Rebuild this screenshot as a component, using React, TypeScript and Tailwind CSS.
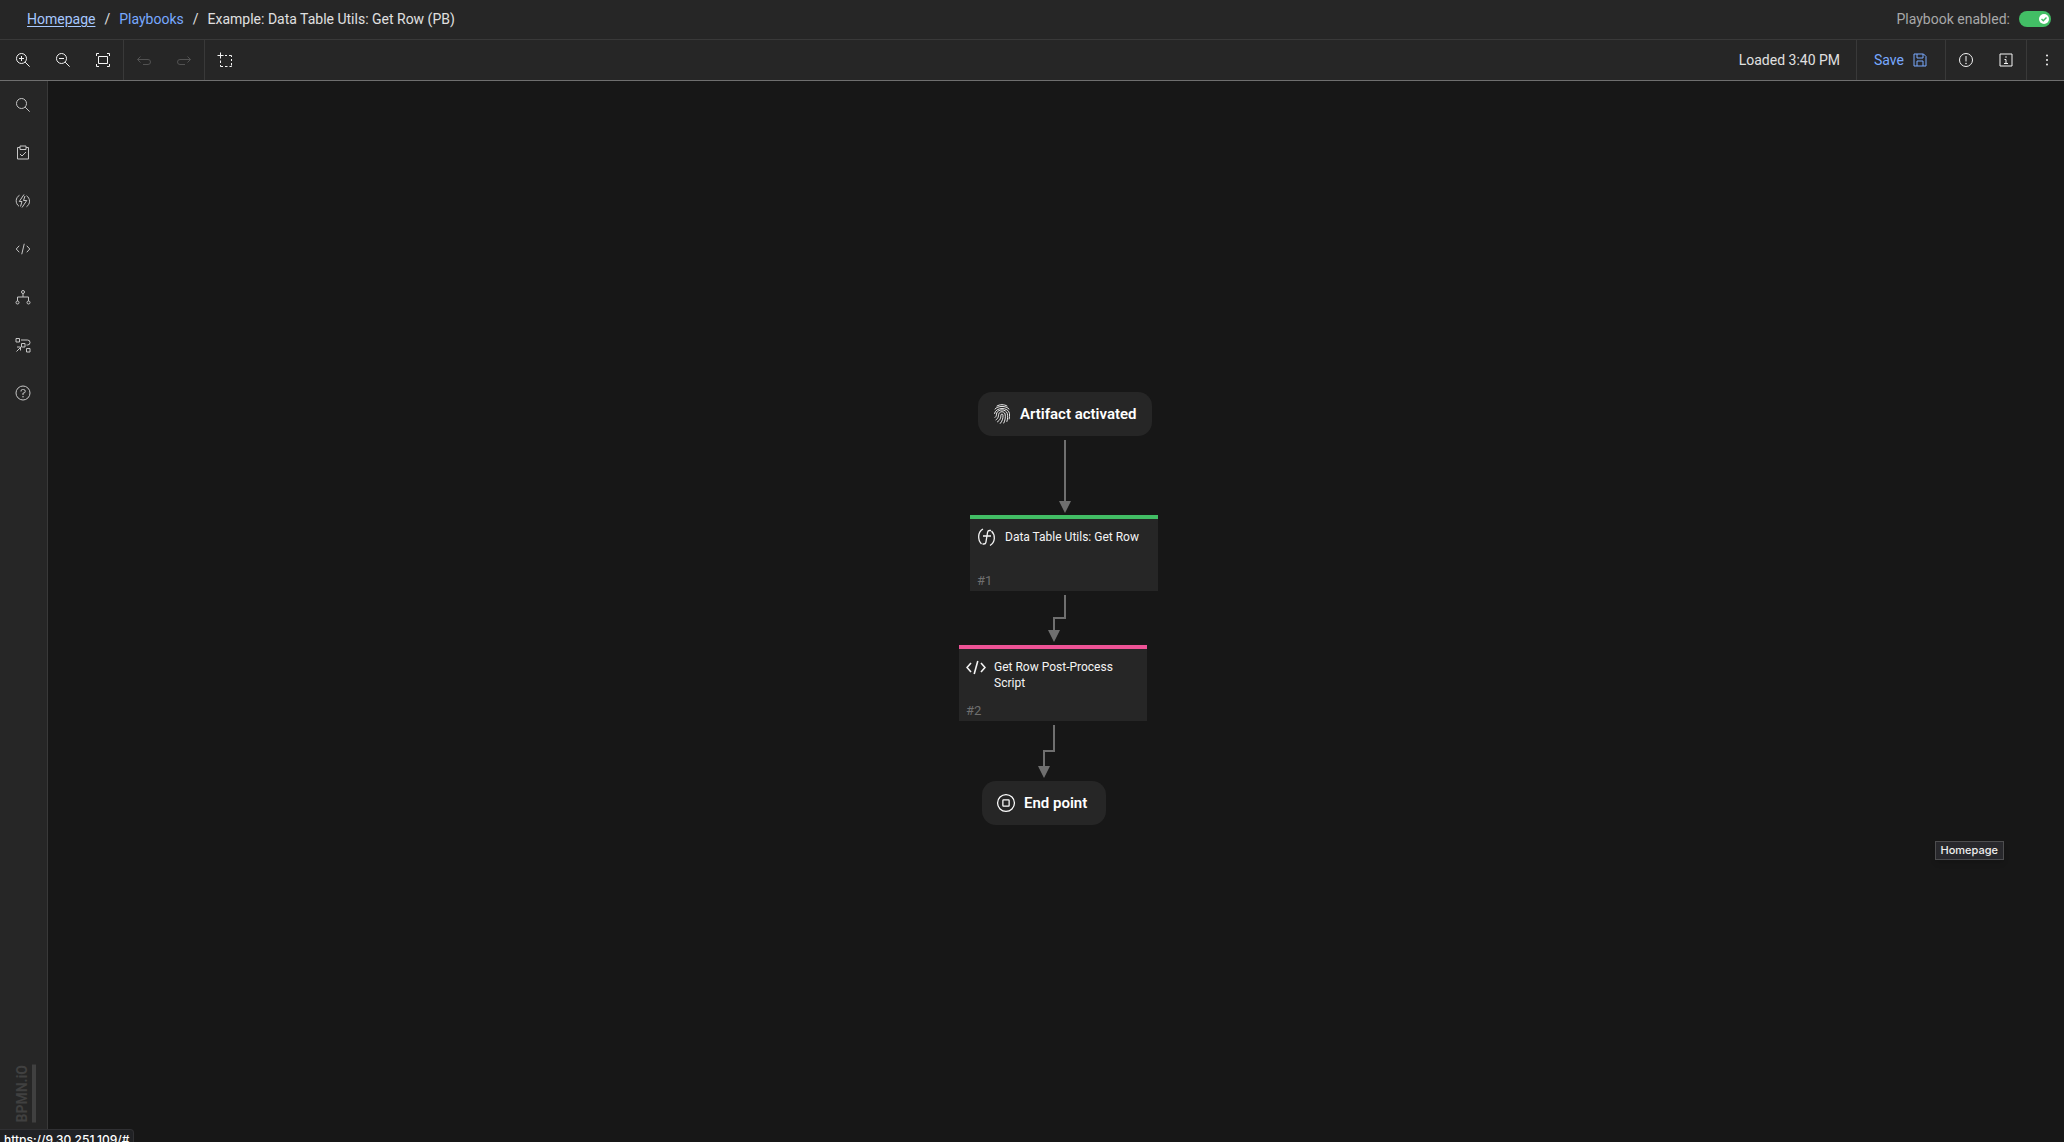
import type { ReactNode } from "react";

const strokeProps = { fill: "none", stroke: "currentColor", strokeWidth: 2 };

function Icon({ children, className = "size-4" }: { children: ReactNode; className?: string }) {
  return (
    <svg viewBox="0 0 32 32" className={className} aria-hidden="true" {...strokeProps}>
      {children}
    </svg>
  );
}

const ZoomIn = () => (
  <Icon>
    <circle cx="13" cy="13" r="10" />
    <path d="M20.3 20.3 29.3 29.3M8 13h10M13 8v10" />
  </Icon>
);
const ZoomOut = () => (
  <Icon>
    <circle cx="13" cy="13" r="10" />
    <path d="M20.3 20.3 29.3 29.3M8 13h10" />
  </Icon>
);
const Fit = () => (
  <Icon>
    <path d="M8 3H3v5M24 3h5v5M8 29H3v-5M24 29h5v-5M7 9h18v14H7z" />
  </Icon>
);
const Undo = () => (
  <Icon>
    <path d="M9 9 3 15l6 6M3 15h21a5 5 0 0 1 0 10H14" />
  </Icon>
);
const Redo = () => (
  <Icon>
    <path d="M23 9l6 6-6 6M29 15H8a5 5 0 0 0 0 10h10" />
  </Icon>
);
const Lasso = () => (
  <Icon>
    <path d="M7 1v12M1 7h12M16 7h4M24 7h5v3M29 14v4M29 22v4M29 27v2h-4M21 29h-5M12 29H7v-3M7 22v-5" />
  </Icon>
);
const Save = () => (
  <Icon>
    <path d="M4 4h19l5 5v19H4zM10 4v8h12V4M10 28V18h12v10" />
  </Icon>
);
const Warning = () => (
  <Icon>
    <circle cx="16" cy="16" r="13" />
    <path d="M16 8v11" />
    <circle cx="16" cy="23" r="1.5" fill="currentColor" stroke="none" />
  </Icon>
);
const Info = () => (
  <Icon>
    <path d="M4 4h24v24H4zM13 15h3v8M12 23h8" />
    <circle cx="16" cy="10" r="1.5" fill="currentColor" stroke="none" />
  </Icon>
);
const Overflow = () => (
  <Icon>
    <g fill="currentColor" stroke="none">
      <circle cx="16" cy="7" r="2" />
      <circle cx="16" cy="16" r="2" />
      <circle cx="16" cy="25" r="2" />
    </g>
  </Icon>
);
const Search = () => (
  <Icon>
    <circle cx="13" cy="13" r="10" />
    <path d="M20.3 20.3 29.3 29.3" />
  </Icon>
);
const Task = () => (
  <Icon>
    <path d="M10 5H5v23h22V5h-5M10 2h12v7H10zM10 18l4 4 8-8" />
  </Icon>
);
const Condition = () => (
  <Icon>
    <path d="M9 4.500a13 13 0 0 0-1 22M23 5.500a13 13 0 0 1 0 22M18 3 8.500 17H14l-3 10M20 6l-3 9h6.500L14 29" />
  </Icon>
);
const Code = () => (
  <Icon>
    <path d="M8.500 9.500 2.500 16l6 6.500M23.500 9.500l6 6.500-6 6.500M18.500 5.500l-5 21" />
  </Icon>
);
const Tree = () => (
  <Icon>
    <circle cx="16" cy="6" r="3" />
    <circle cx="5" cy="27" r="3" />
    <circle cx="27" cy="27" r="3" />
    <path d="M16 9v7M5 24v-8h22v8" />
  </Icon>
);
const Flow = () => (
  <Icon>
    <path d="M2 3h7v7H2zM13 13h7v7h-7zM23 23h7v7h-7zM12 6h13a4 4 0 0 1 0 10h-2M3 29l8-8M4 20h7v7" />
  </Icon>
);
const Help = () => (
  <Icon>
    <circle cx="16" cy="16" r="14" />
    <path d="M12 13v-1a3 3 0 0 1 3-3h2a3.500 3.500 0 0 1 0 7h-1v4" />
    <circle cx="16" cy="23.500" r="1.500" fill="currentColor" stroke="none" />
  </Icon>
);
const ScriptIcon = () => (
  <svg viewBox="0 0 20 20" className="size-5 shrink-0" fill="none" stroke="#f4f4f4" strokeWidth="1.600" aria-hidden="true">
    <path d="M5 6 1 10.500 5 15M15 6l4 4.500-4 4.500M11.800 4 8.200 17" />
  </svg>
);
const Fingerprint = () => (
  <svg viewBox="0 0 16 20" className="h-5 w-4 shrink-0" fill="none" stroke="currentColor" strokeWidth="0.900" strokeLinecap="round" aria-hidden="true">
    <path d="M3 2C6 .2 10 .2 13 2M1 5C4 1.500 12 1.500 15 5" />
    <path d="M.5 9.500C1.500 2.800 14.500 2.800 15.500 9.500c.2 2 .2 4-.3 5.500" />
    <path d="M1 13.500C3 12 2.200 10.500 2.700 9 4.500 4.800 11.800 4.800 13.300 9.500c.6 3 .4 5.500-.4 8" />
    <path d="M2 15.800C5 14 4.200 11.500 4.800 9.800 6 7 10 7 11.100 10c.6 3.500 0 6.500-1.300 9" />
    <path d="M3.500 17.800c3-2 3.300-4 3.400-6.600.2-1.600 2-1.600 2.100 0 .2 3.200-.8 6-2.700 8.200" />
  </svg>
);
const FunctionIcon = () => (
  <svg viewBox="0 0 20 20" className="size-5 shrink-0" fill="none" stroke="#f4f4f4" strokeWidth="1.300" aria-hidden="true">
    <path d="M6 2C.5 5 .5 13 4.500 17M14.500 4c4 4 4 11-1.500 14.500M14 3.500h-1.500c-1.200 0-1.700.6-1.900 1.700L8.900 15.300c-.2 1.100-.9 1.700-2 1.700H5.500M6 9h8" />
  </svg>
);
const EndIcon = () => (
  <Icon className="size-5 shrink-0">
    <circle cx="16" cy="16" r="13.500" />
    <rect x="11" y="11" width="10" height="10" rx="1" />
  </Icon>
);

function ToolButton({ label, children, disabled }: { label: string; children: ReactNode; disabled?: boolean }) {
  return (
    <button
      type="button"
      aria-label={label}
      disabled={disabled}
      className="flex h-10 w-10 items-center justify-center text-[#f4f4f4] disabled:text-[#525252]"
    >
      {children}
    </button>
  );
}

const sideItems = [
  { label: "Search", icon: <Search /> },
  { label: "Tasks", icon: <Task /> },
  { label: "Functions", icon: <Condition /> },
  { label: "Scripts", icon: <Code /> },
  { label: "Sub-playbooks", icon: <Tree /> },
  { label: "Decision points", icon: <Flow /> },
  { label: "Help", icon: <Help /> },
];

function Header() {
  return (
    <header className="flex h-10 shrink-0 items-center justify-between border-b border-[#393939] bg-[#262626] pr-[13px] pb-px pl-[27px]">
      <nav aria-label="Breadcrumb" className="flex items-center gap-[9px] text-sm">
        <a href="#" className="text-[#a6c8ff] underline underline-offset-2">Homepage</a>
        <span>/</span>
        <a href="#" className="text-[#78a9ff]">Playbooks</a>
        <span>/</span>
        <span>Example: Data Table Utils: Get Row (PB)</span>
      </nav>
      <label className="flex items-center gap-[9px] text-sm text-[#a8a8a8]">
        Playbook enabled:
        <span className="relative h-4 w-8">
          <input type="checkbox" role="switch" defaultChecked className="block h-4 w-8 appearance-none rounded-full bg-[#42be65]" />
          <svg viewBox="0 0 10 10" className="pointer-events-none absolute top-[3px] right-[2px] size-[10px]" aria-hidden="true">
            <circle cx="5" cy="5" r="5" fill="#fff" />
            <path d="M2.500 5 4.300 6.800 7.500 3.500" fill="none" stroke="#42be65" strokeWidth="1.400" />
          </svg>
        </span>
      </label>
    </header>
  );
}

function Toolbar() {
  return (
    <div role="toolbar" aria-label="Playbook" className="flex h-[41px] shrink-0 justify-between border-b border-[#6f6f6f] bg-[#262626]">
      <div className="flex divide-x divide-[#393939]">
        <div className="flex pl-[3px]">
          <ToolButton label="Zoom in"><ZoomIn /></ToolButton>
          <ToolButton label="Zoom out"><ZoomOut /></ToolButton>
          <ToolButton label="Fit to screen"><Fit /></ToolButton>
        </div>
        <div className="flex">
          <ToolButton label="Undo" disabled><Undo /></ToolButton>
          <ToolButton label="Redo" disabled><Redo /></ToolButton>
        </div>
        <div className="flex">
          <ToolButton label="Select area"><Lasso /></ToolButton>
        </div>
      </div>
      <div className="flex divide-x divide-[#393939]">
        <p className="flex items-center pr-4 text-sm">Loaded 3:40 PM</p>
        <button type="button" className="flex items-center gap-2 px-[17px] text-sm text-[#78a9ff]">
          Save
          <Save />
        </button>
        <div className="flex">
          <ToolButton label="Errors"><Warning /></ToolButton>
          <ToolButton label="Details"><Info /></ToolButton>
        </div>
        <div className="-mr-[3px] flex">
          <ToolButton label="More options"><Overflow /></ToolButton>
        </div>
      </div>
    </div>
  );
}

function Sidebar() {
  return (
    <aside className="flex w-12 shrink-0 flex-col justify-between border-r border-[#393939] bg-[#262626]">
      <div className="flex flex-col pr-px">
        {sideItems.map((item) => (
          <button key={item.label} type="button" aria-label={item.label} className="flex h-12 items-center justify-center text-[#c6c6c6]">
            {item.icon}
          </button>
        ))}
      </div>
      <a
        href="#"
        className="mb-[19px] ml-3 self-start rotate-180 border-l-4 border-[#404040] text-sm leading-5 font-bold text-[#404040] [writing-mode:vertical-rl]"
      >
        BPMN.iO
      </a>
    </aside>
  );
}

function Step({ id, title, icon, className }: { id: string; title: string; icon: ReactNode; className: string }) {
  return (
    <div className={`absolute flex h-[76px] w-[188px] flex-col justify-between border-t-4 bg-[#262626] px-[7px] pt-2 pb-[2px] ${className}`}>
      <div className="flex gap-2">
        {icon}
        <p className="pt-[2px] text-xs leading-4 text-[#f4f4f4]">{title}</p>
      </div>
      <p className="text-[13px] leading-4 text-[#6f6f6f]">{id}</p>
    </div>
  );
}

function Canvas() {
  return (
    <main className="relative flex-1 overflow-hidden bg-[#171717]">
      <svg className="absolute inset-0 size-full" fill="none" stroke="#6f6f6f" strokeWidth="2" aria-hidden="true">
        <path d="M1017 359v64M1017 514v23h-11v14M1006 644v26h-10v17" />
        <g fill="#6f6f6f" stroke="none">
          <path d="M1011 420h12l-6 12zM1000 549h12l-6 12zM990 685h12l-6 12z" />
        </g>
      </svg>
      <div className="absolute top-[311px] left-[930px] flex h-11 w-[174px] items-center gap-[10px] rounded-[14px] bg-[#262626] pl-4 text-[15px] font-semibold text-white">
        <Fingerprint />
        Artifact activated
      </div>
      <Step id="#1" title="Data Table Utils: Get Row" icon={<FunctionIcon />} className="top-[434px] left-[922px] border-[#42be65]" />
      <Step id="#2" title="Get Row Post-Process Script" icon={<ScriptIcon />} className="top-[564px] left-[911px] border-[#ee5396]" />
      <div className="absolute top-[700px] left-[934px] flex h-11 w-[124px] items-center gap-2 rounded-[14px] bg-[#262626] pl-[14px] text-[15px] font-semibold text-white">
        <EndIcon />
        End point
      </div>
      <div role="tooltip" className="absolute right-[60px] bottom-[282px] border border-[#4d4d4f] bg-[#28282c] px-[5px] text-[11px] leading-[17px] font-medium text-[#eeeeee] shadow-md [font-family:Inter,sans-serif]">
        Homepage
      </div>
    </main>
  );
}

export default function App() {
  return (
    <div className="relative flex h-screen flex-col overflow-hidden bg-[#171717] text-[#e0e0e0] [font-family:Roboto,sans-serif]">
      <Header />
      <Toolbar />
      <div className="flex min-h-0 flex-1">
        <Sidebar />
        <Canvas />
      </div>
      <div className="absolute -bottom-[9px] left-0 rounded-tr border border-l-0 border-[#303033] bg-[#202124] px-1 text-xs leading-5 font-medium text-white [font-family:Inter,sans-serif]">
        https://9.30.251.109/#
      </div>
    </div>
  );
}
